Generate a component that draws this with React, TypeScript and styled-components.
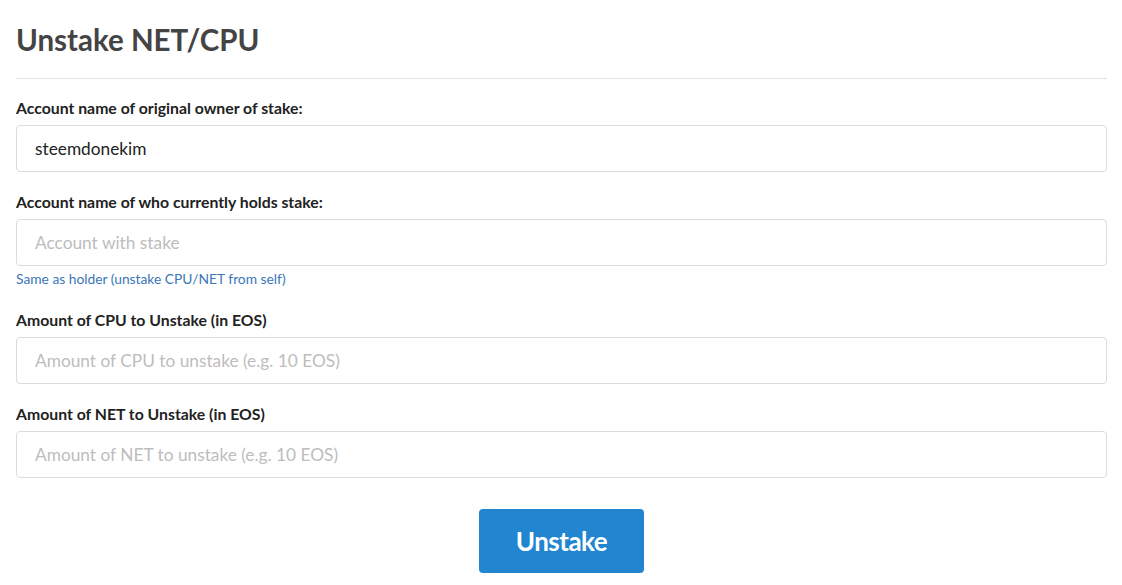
import React, { FC, useState } from 'react';
import styled, { createGlobalStyle } from 'styled-components';

const GlobalStyle = createGlobalStyle`
    body {
        margin: 0;
        background: #fff;
        font-family: Lato, "Noto Sans", sans-serif;
        color: #222;
    }
`

const Root = styled.div`
    padding: 0 15px 0 16px;
`

const Title = styled.h2`
    margin: 0;
    padding: 22px 0 20px;
    font-size: 29.5px;
    font-weight: 700;
    line-height: 36px;
    color: #444;
    border-bottom: 1px solid #e2e2e2;
`

const Form = styled.form`
    display: flex;
    flex-direction: column;
    padding-top: 19px;
`

const Field = styled.div`
    display: flex;
    flex-direction: column;
    margin-bottom: 20px;
`

const Label = styled.label`
    font-size: 15.8px;
    font-weight: 700;
    line-height: 20px;
    margin-bottom: 7px;
    color: #222;
`

const Input = styled.input`
    height: 47px;
    box-sizing: border-box;
    padding: 0 18px;
    border: 1px solid #dcdcdc;
    border-radius: 4px;
    font-family: Lato, "Noto Sans", sans-serif;
    font-size: 17.3px;
    color: #222;
    outline: none;

    &::placeholder {
        color: #bdbdbd;
    }
`

const HelpLink = styled.a`
    margin: 5px 0 3px;
    font-size: 13.8px;
    line-height: 16px;
    color: #3a77b8;
    text-decoration: none;
    cursor: pointer;
`

const Actions = styled.div`
    display: flex;
    justify-content: center;
    padding-top: 11px;
`

const SubmitButton = styled.button`
    width: 165px;
    height: 64px;
    border: none;
    border-radius: 4px;
    background: #2185d0;
    color: #fff;
    font-family: Lato, "Noto Sans", sans-serif;
    font-size: 26px;
    font-weight: 700;
    letter-spacing: -0.5px;
    cursor: pointer;
`

interface FieldProps {
    label: string;
    placeholder?: string;
    value?: string;
    help?: string;
}

const FormField: FC<FieldProps> = ({ label, placeholder, value, help }) => {
    const [text, setText] = useState<string>(value ?? '');

    return (
        <Field>
            <Label>{label}</Label>
            <Input
                placeholder={placeholder}
                value={text}
                onChange={(e) => setText(e.target.value)}
            />
            {help && <HelpLink>{help}</HelpLink>}
        </Field>
    );
}

const App: FC = () => {
    return (
        <Root>
            <GlobalStyle />
            <Title>Unstake NET/CPU</Title>
            <Form onSubmit={(e) => e.preventDefault()}>
                <FormField label="Account name of original owner of stake:" value="steemdonekim" />
                <FormField
                    label="Account name of who currently holds stake:"
                    placeholder="Account with stake"
                    help="Same as holder (unstake CPU/NET from self)"
                />
                <FormField label="Amount of CPU to Unstake (in EOS)" placeholder="Amount of CPU to unstake (e.g. 10 EOS)" />
                <FormField label="Amount of NET to Unstake (in EOS)" placeholder="Amount of NET to unstake (e.g. 10 EOS)" />
                <Actions>
                    <SubmitButton type="submit">Unstake</SubmitButton>
                </Actions>
            </Form>
        </Root>
    );
}

export default App;
